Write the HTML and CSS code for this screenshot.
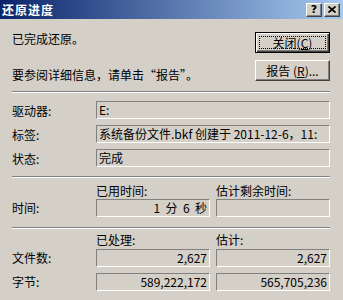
FILE: index.html
```html
<!DOCTYPE html>
<html lang="zh-CN">
<head>
    <meta charset="UTF-8">
    <meta name="viewport" content="width=device-width, initial-scale=1.0">
    <title>还原进度</title>
    <link rel="stylesheet" href="styles.css">
</head>
<body>
    <div class="window">
        <div class="titlebar">
            <span class="title">还原进度</span>
            <div class="caption-btns">
                <span class="cap-btn help">?</span>
                <span class="cap-btn">
                    <svg width="8" height="7" viewBox="0 0 8 7">
                        <path d="M0.5 0.5L7.5 6.5M7.5 0.5L0.5 6.5" stroke="#000" stroke-width="1.7"/>
                    </svg>
                </span>
            </div>
        </div>

        <div class="content">
            <div class="top">
                <div class="msg">
                    <p>已完成还原。</p>
                    <p class="hint">要参阅详细信息，请单击“报告”。</p>
                </div>
                <div class="actions">
                    <button class="btn default"><span class="focus">关闭(<u>C</u>)</span></button>
                    <button class="btn"><span>报告 (<u>R</u>)...</span></button>
                </div>
            </div>

            <div class="sep"></div>

            <!-- 驱动器 / 标签 / 状态 -->
            <div class="info">
                <span>驱动器:</span>
                <div class="field">E:</div>
                <span>标签:</span>
                <div class="field">系统备份文件.bkf 创建于 2011-12-6，11:</div>
                <span>状态:</span>
                <div class="field">完成</div>
            </div>

            <div class="sep sep-time"></div>

            <div class="stats time">
                <span></span>
                <span class="head">已用时间:</span>
                <span class="head">估计剩余时间:</span>
                <span class="label">时间:</span>
                <div class="field num">1&nbsp; 分&nbsp; 6&nbsp; 秒</div>
                <div class="field num"></div>
            </div>

            <div class="sep sep-count"></div>

            <div class="stats count">
                <span></span>
                <span class="head">已处理:</span>
                <span class="head">估计:</span>
                <span class="label">文件数:</span>
                <div class="field num">2,627</div>
                <div class="field num">2,627</div>
                <span class="label">字节:</span>
                <div class="field num">589,222,172</div>
                <div class="field num">565,705,236</div>
            </div>
        </div>
    </div>
</body>
</html>
```

FILE: styles.css
```css
* {
    margin: 0;
    padding: 0;
    box-sizing: border-box;
}

body {
    font-family: "Noto Sans CJK SC", sans-serif;
    font-size: 12px;
    color: #000;
}

.window {
    width: 343px;
    height: 300px;
    overflow: hidden;
    background-color: #d4d0c8;
}

/* 标题栏 */
.titlebar {
    height: 19px;
    display: flex;
    align-items: center;
    justify-content: space-between;
    padding: 0 3px 0 2px;
    background: linear-gradient(to right, #0a246a, #a6caf0);
}

.title {
    color: #fff;
    font-weight: bold;
    letter-spacing: 1px;
    line-height: 19px;
}

.caption-btns {
    display: flex;
    gap: 2px;
}

.cap-btn {
    width: 16px;
    height: 14px;
    display: flex;
    align-items: center;
    justify-content: center;
    background-color: #d4d0c8;
    border: 1px solid;
    border-color: #fff #404040 #404040 #fff;
    box-shadow: inset -1px -1px #808080;
}

.cap-btn.help {
    font-family: "DejaVu Sans", sans-serif;
    font-weight: bold;
    font-size: 11px;
    line-height: 12px;
}

/* 内容 */
.content {
    padding: 0 13px 0 12px;
}

.top {
    display: flex;
    justify-content: space-between;
    margin-top: 13px;
}

.msg p {
    line-height: 14px;
}

.msg .hint {
    margin-top: 22px;
}

.actions {
    display: flex;
    flex-direction: column;
    gap: 7px;
}

.btn {
    width: 75px;
    height: 21px;
    display: flex;
    align-items: stretch;
    background-color: #d4d0c8;
    border: 1px solid;
    border-color: #fff #404040 #404040 #fff;
    box-shadow: inset -1px -1px #808080;
    font: inherit;
    color: #000;
}

.btn span {
    flex: 1;
    display: flex;
    align-items: center;
    justify-content: center;
    line-height: 13px;
    white-space: pre;
}

.btn.default {
    border-color: #000;
    box-shadow: inset 1px 1px #fff, inset -1px -1px #404040, inset -2px -2px #808080;
}

.btn .focus {
    margin: 3px;
    border: 1px dotted #000;
}

.sep {
    height: 2px;
    margin-top: 9px;
    border-top: 1px solid #808080;
    border-bottom: 1px solid #fff;
}

.info {
    display: grid;
    grid-template-columns: 78px 1fr;
    grid-auto-rows: 18px;
    column-gap: 6px;
    row-gap: 6px;
    align-items: center;
    margin-top: 8px;
}

.field {
    height: 18px;
    line-height: 16px;
    padding: 0 2px;
    white-space: nowrap;
    overflow: hidden;
    border: 1px solid;
    border-color: #808080 #fff #fff #808080;
}

.field.num {
    text-align: right;
}

/* 时间、文件数 */
.stats {
    display: grid;
    grid-template-columns: 78px 1fr 1fr;
    column-gap: 6px;
    align-items: end;
}

.stats .head {
    line-height: 14px;
}

.stats .label {
    line-height: 18px;
}

.time {
    margin-top: 6px;
    grid-template-rows: 14px 19px;
}

.sep-count {
    margin-top: 10px;
}

.count {
    margin-top: 4px;
    grid-template-rows: 14px 20px 24px;
}
```
